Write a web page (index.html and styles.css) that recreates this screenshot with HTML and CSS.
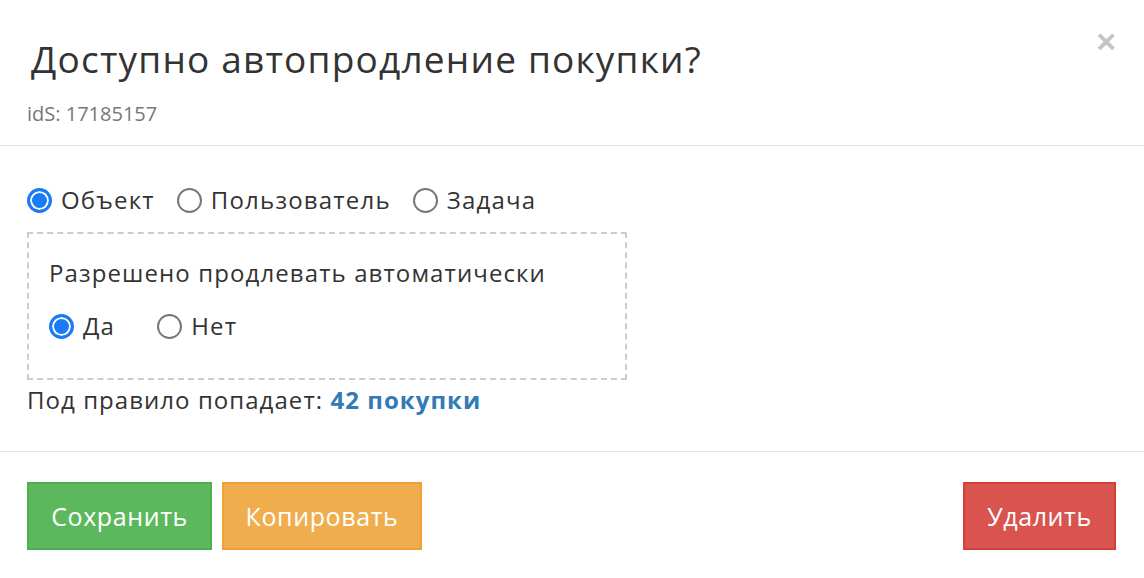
FILE: index.html
```html
<!DOCTYPE html>
<html lang="ru">
<head>
<meta charset="utf-8">
<title>Доступно автопродление покупки?</title>
<link rel="stylesheet" href="styles.css">
</head>
<body>
<div class="modal">
  <div class="modal-header">
    <button class="close" type="button" aria-label="Закрыть">×</button>
    <h4 class="modal-title">Доступно автопродление покупки?</h4>
    <div class="ids">idS: 17185157</div>
  </div>
  <div class="modal-body">
    <div class="radio-row">
      <label class="opt"><span class="radio checked"></span>Объект</label>
      <label class="opt"><span class="radio"></span>Пользователь</label>
      <label class="opt"><span class="radio"></span>Задача</label>
    </div>
    <div class="rule-box">
      <div class="rule-label">Разрешено продлевать автоматически</div>
      <div class="radio-row inner">
        <label class="opt"><span class="radio checked"></span>Да</label>
        <label class="opt"><span class="radio"></span>Нет</label>
      </div>
    </div>
    <div class="count">Под правило попадает: <a class="count-link" href="#">42 покупки</a></div>
  </div>
  <div class="modal-footer">
    <div class="left-btns">
      <button class="btn btn-success" type="button">Сохранить</button>
      <button class="btn btn-warning" type="button">Копировать</button>
    </div>
    <button class="btn btn-danger" type="button">Удалить</button>
  </div>
</div>
</body>
</html>
```

FILE: styles.css
```css
* { box-sizing: border-box; }
html, body { margin: 0; padding: 0; background: #fff; }
body {
  font-family: "Open Sans", "Noto Sans", sans-serif;
  color: #333;
  width: 1144px;
  height: 578px;
  overflow: hidden;
}
.modal { width: 1144px; }
.modal-header {
  position: relative;
  padding: 31px 27px 0 27px;
  height: 146px;
  border-bottom: 1px solid #e5e5e5;
}
.modal-title {
  margin: 0 0 0 4px;
  font-weight: 400;
  font-size: 37px;
  letter-spacing: 1.2px;
  line-height: 56px;
  color: #333;
}
.ids {
  margin-top: 15px;
  font-size: 20px;
  line-height: 24px;
  color: #777;
}
.close {
  position: absolute;
  top: 26px;
  right: 28px;
  border: 0;
  background: none;
  padding: 0;
  font-family: "Liberation Sans", Arial, sans-serif;
  font-weight: 700;
  font-size: 34px;
  line-height: 30px;
  color: #c4c4c4;
}
.modal-body {
  padding: 39px 27px 0 27px;
  height: 306px;
  border-bottom: 1px solid #e5e5e5;
}
.radio-row {
  display: flex;
  align-items: center;
  gap: 22px;
  font-size: 24px;
  letter-spacing: 1.2px;
  line-height: 30px;
}
.opt {
  display: flex;
  align-items: center;
  gap: 9px;
}
.radio {
  width: 25px;
  height: 25px;
  border-radius: 50%;
  border: 2px solid #777;
  background: #fff;
  flex: none;
}
.radio.checked {
  border: 3px solid #1a7cf5;
  background: #1a7cf5;
  box-shadow: inset 0 0 0 2px #fff;
}
.rule-box {
  margin-top: 17px;
  width: 600px;
  height: 148px;
  border: 2px dashed #ccc;
  padding: 24px 20px 0 20px;
}
.rule-label {
  font-size: 24px;
  letter-spacing: 1.1px;
  line-height: 30px;
}
.radio-row.inner {
  margin-top: 23px;
  gap: 42px;
}
.count {
  margin-top: 4px;
  font-size: 24px;
  letter-spacing: 1.05px;
  line-height: 32px;
}
.count-link {
  color: #337ab7;
  font-weight: 700;
  text-decoration: none;
}
.modal-footer {
  display: flex;
  justify-content: space-between;
  align-items: flex-start;
  padding: 30px 28px 0 27px;
}
.left-btns { display: flex; gap: 10px; }
.btn {
  height: 68px;
  border: 2px solid transparent;
  font-family: "Open Sans", "Noto Sans", sans-serif;
  font-size: 25px;
  letter-spacing: 0.6px;
  color: #fff;
  padding: 0;
}
.btn-success { background: #5cb85c; border-color: #4cae4c; width: 185px; }
.btn-warning { background: #f0ad4e; border-color: #eea236; width: 200px; }
.btn-danger { background: #d9534f; border-color: #d43f3a; width: 153px; }
```
